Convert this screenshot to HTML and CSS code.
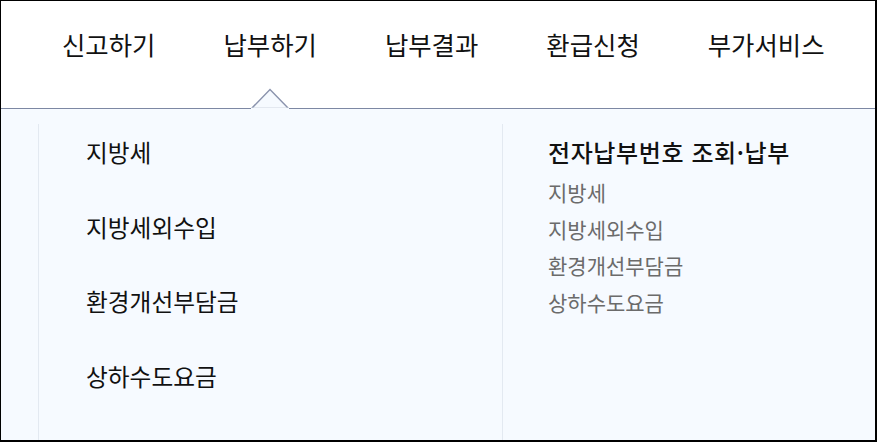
FILE: index.html
```html
<!DOCTYPE html>
<html lang="ko">
<head>
<meta charset="utf-8">
<link rel="stylesheet" href="styles.css">
</head>
<body>
<div class="frame">
  <header class="gnb">
    <ul class="gnb-list">
      <li class="gnb-item">신고하기</li>
      <li class="gnb-item is-active">납부하기<span class="caret"><svg width="38" height="21" viewBox="0 0 38 21"><polygon points="0.5,20.5 19,1.5 37.5,20.5" fill="#f6faff" stroke="#8a93ad" stroke-width="1.4"/><rect x="0" y="19.7" width="38" height="2" fill="#f6faff"/></svg></span></li>
      <li class="gnb-item">납부결과</li>
      <li class="gnb-item">환급신청</li>
      <li class="gnb-item">부가서비스</li>
    </ul>
  </header>
  <div class="panel">
    <div class="col col-main">
      <ul class="menu">
        <li>지방세</li>
        <li>지방세외수입</li>
        <li>환경개선부담금</li>
        <li>상하수도요금</li>
      </ul>
    </div>
    <div class="col col-sub">
      <div class="sub-title">전자납부번호 조회·납부</div>
      <ul class="sub-list">
        <li>지방세</li>
        <li>지방세외수입</li>
        <li>환경개선부담금</li>
        <li>상하수도요금</li>
      </ul>
    </div>
  </div>
</div>
</body>
</html>
```
FILE: styles.css
```css
* { box-sizing: border-box; }
html, body { margin: 0; padding: 0; }
body {
  font-family: "Noto Sans CJK KR", "Noto Sans", sans-serif;
  color: #111;
}
ul { list-style: none; margin: 0; padding: 0; }
.frame {
  width: 877px;
  height: 442px;
  border-style: solid;
  border-color: #000;
  border-width: 1px 2px 2px 1px;
  overflow: hidden;
  background: #f6faff;
  display: flex;
  flex-direction: column;
}
.gnb {
  height: 108px;
  flex: none;
  background: #fff;
  border-bottom: 1px solid #7d88a3;
  position: relative;
}
.gnb-list {
  display: flex;
  gap: 68px;
  padding-left: 61px;
  padding-top: 25px;
}
.gnb-item {
  position: relative;
  font-size: 25.4px;
  line-height: 36px;
}
.caret {
  position: absolute;
  left: 50%;
  margin-left: -19px;
  top: 62px;
  width: 38px;
  height: 21px;
  line-height: 0;
}
.caret svg { display: block; }
.panel {
  flex: 1;
  display: flex;
  padding: 15px 0 0 37px;
}
.col {
  border-left: 1px solid #e3e9f1;
  padding-top: 9px;
}
.col-main {
  width: 464px;
  padding-left: 47px;
}
.menu li {
  font-size: 23.7px;
  line-height: 38px;
  margin-bottom: 36.5px;
}
.col-sub {
  flex: 1;
  padding-left: 45px;
}
.sub-title {
  font-size: 24px;
  line-height: 38px;
  font-weight: 500;
  letter-spacing: 0.6px;
}
.sub-list {
  margin-top: 3px;
}
.sub-list li {
  font-size: 21px;
  line-height: 36.5px;
  color: #6b6b6b;
}
```
